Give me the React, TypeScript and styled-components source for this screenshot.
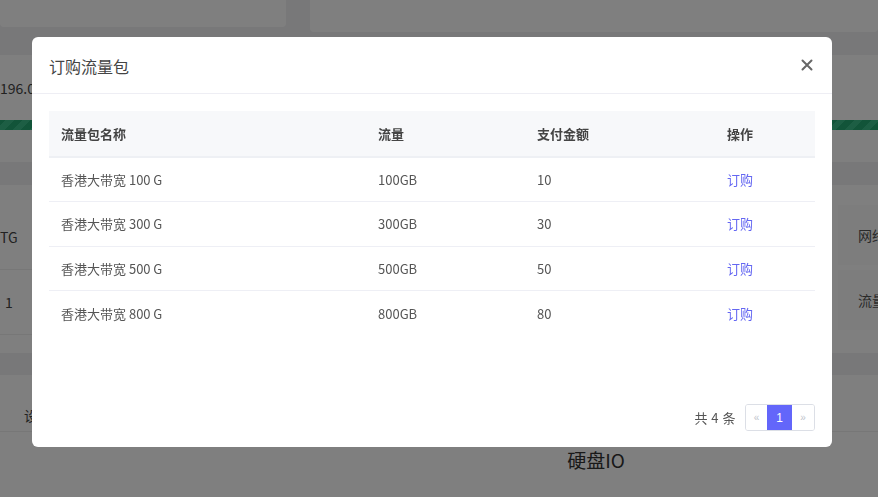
import React from "react";
import styled, { createGlobalStyle } from "styled-components";

const Global = createGlobalStyle`
  html, body { margin: 0; padding: 0; }
  body {
    width: 878px;
    height: 497px;
    overflow: hidden;
    background: #f0f0f2;
    font-family: "Noto Sans CJK SC", "Noto Sans", "Liberation Sans", sans-serif;
    color: #444;
  }
`;

/* ---------- background page ---------- */
const Page = styled.div`
  width: 878px;
  height: 497px;
  display: flex;
  flex-direction: column;
  background: #f0f0f2;
  overflow: hidden;
`;

const TopRow = styled.div`
  display: flex;
  gap: 24px;
  align-items: flex-start;
`;

const TopCard = styled.div<{ $w?: number; $h: number }>`
  background: #fff;
  height: ${(p) => p.$h}px;
  ${(p) => (p.$w ? `width: ${p.$w}px;` : "flex: 1;")}
  border-radius: 0 0 4px 4px;
`;

const InfoCard = styled.div`
  margin-top: 23px;
  height: 107px;
  background: #fff;
  display: flex;
  flex-direction: column;
`;

const InfoText = styled.div`
  font-size: 14px;
  color: #444;
  margin-top: 24px;
  line-height: 18px;
`;

const Stripe = styled.div`
  margin-top: 23px;
  height: 10px;
  background: repeating-linear-gradient(
    -45deg,
    #25a873 0 6px,
    #3bbd88 6px 12px
  );
`;

const StatsCard = styled.div`
  margin-top: 23px;
  height: 168px;
  background: #fff;
  display: flex;
  justify-content: space-between;
`;

const LeftCol = styled.div`
  display: flex;
  flex-direction: column;
  width: 40px;
`;

const LeftCell = styled.div<{ $pad: number }>`
  height: 64px;
  display: flex;
  align-items: center;
  padding-left: ${(p) => p.$pad}px;
  font-size: 14px;
  color: #444;
  border-bottom: 1px solid #eee;
  &:first-child { margin-top: 20px; }
`;

const RightCol = styled.div`
  display: flex;
  flex-direction: column;
  gap: 5px;
  width: 40px;
  padding-top: 20px;
`;

const StatBox = styled.div`
  height: 60px;
  background: #fafafa;
  display: flex;
  align-items: center;
  padding-left: 20px;
  font-size: 14px;
  color: #555;
  white-space: nowrap;
  overflow: hidden;
`;

const BottomCard = styled.div`
  margin-top: 22px;
  background: #fff;
  flex: 1;
  display: flex;
  flex-direction: column;
`;

const BottomRow = styled.div`
  height: 57px;
  box-sizing: border-box;
  padding-top: 23px;
  border-bottom: 1px solid #eee;
  display: flex;
  align-items: center;
  padding-left: 24px;
  font-size: 14px;
  color: #444;
`;

const ChartTitle = styled.div`
  text-align: center;
  padding-left: 314px;
  margin-top: 14px;
  font-size: 19px;
  color: #333;
`;

/* ---------- overlay + modal ---------- */
const Overlay = styled.div`
  position: fixed;
  inset: 0;
  background: rgba(0, 0, 0, 0.5);
  display: flex;
  align-items: flex-start;
  padding: 37px 0 0 32px;
`;

const Modal = styled.div`
  width: 800px;
  height: 410px;
  background: #fff;
  border-radius: 6px;
  display: flex;
  flex-direction: column;
  box-sizing: border-box;
`;

const Header = styled.div`
  height: 57px;
  box-sizing: border-box;
  border-bottom: 1px solid #eeeef4;
  display: flex;
  align-items: center;
  justify-content: space-between;
  padding: 0 17px 0 17px;
`;

const Title = styled.div`
  font-size: 16px;
  color: #444;
  margin-top: 1px;
`;

const Close = styled.button`
  border: none;
  background: transparent;
  padding: 0;
  width: 14px;
  height: 14px;
  display: flex;
  align-items: center;
  justify-content: center;
  cursor: pointer;
  margin-right: 1px;
  margin-top: -1px;
`;

const Body = styled.div`
  flex: 1;
  padding: 17px 17px 16px 17px;
  display: flex;
  flex-direction: column;
`;

const Table = styled.table`
  width: 766px;
  border-collapse: collapse;
  table-layout: fixed;
`;

const Th = styled.th<{ $w: number }>`
  width: ${(p) => p.$w}px;
  height: 46px;
  background: #f7f8fa;
  border-bottom: 2px solid #eef0f4;
  text-align: left;
  padding: 0 12px;
  font-size: 13px;
  font-weight: 700;
  color: #444;
  box-sizing: border-box;
`;

const Tr = styled.tr`
  &:not(:last-child) td { border-bottom: 1px solid #eeeff5; }
`;

const Td = styled.td`
  height: 44.5px;
  padding: 0 12px;
  font-size: 13px;
  color: #555;
  box-sizing: border-box;
`;

const Link = styled.a`
  color: #6467f2;
  text-decoration: none;
  cursor: pointer;
`;

const Footer = styled.div`
  margin-top: auto;
  display: flex;
  justify-content: flex-end;
  align-items: center;
  gap: 9px;
`;

const Total = styled.span`
  font-size: 13px;
  color: #555;
  letter-spacing: 0.5px;
`;

const Pager = styled.div`
  display: flex;
  height: 27px;
  border: 1px solid #dcdfe6;
  border-radius: 3px;
  overflow: hidden;
  box-sizing: border-box;
`;

const PageBtn = styled.span<{ $active?: boolean; $w: number }>`
  width: ${(p) => p.$w}px;
  display: flex;
  align-items: center;
  justify-content: center;
  font-size: ${(p) => (p.$active ? 12 : 10)}px;
  font-family: "Liberation Sans", sans-serif;
  color: ${(p) => (p.$active ? "#fff" : "#c0c4cc")};
  background: ${(p) => (p.$active ? "#6366fa" : "#fff")};
`;

const rows = [
  { name: "香港大带宽 100\u2009G", flow: "100GB", price: "10" },
  { name: "香港大带宽 300\u2009G", flow: "300GB", price: "30" },
  { name: "香港大带宽 500\u2009G", flow: "500GB", price: "50" },
  { name: "香港大带宽 800\u2009G", flow: "800GB", price: "80" },
];

export default function App() {
  return (
    <>
      <Global />
      <Page>
        <TopRow>
          <TopCard $w={286} $h={27} />
          <TopCard $h={32} />
        </TopRow>
        <InfoCard>
          <InfoText>196.0</InfoText>
          <Stripe />
        </InfoCard>
        <StatsCard>
          <LeftCol>
            <LeftCell $pad={0}>TG</LeftCell>
            <LeftCell $pad={5}>1</LeftCell>
          </LeftCol>
          <RightCol>
            <StatBox>网络</StatBox>
            <StatBox>流量</StatBox>
          </RightCol>
        </StatsCard>
        <BottomCard>
          <BottomRow>设置</BottomRow>
          <ChartTitle>硬盘IO</ChartTitle>
        </BottomCard>
      </Page>
      <Overlay>
        <Modal>
          <Header>
            <Title>订购流量包</Title>
            <Close aria-label="关闭">
              <svg width="12" height="12" viewBox="0 0 12 12">
                <path
                  d="M1.5 1.5 L10.5 10.5 M10.5 1.5 L1.5 10.5"
                  stroke="#666"
                  strokeWidth="2"
                  strokeLinecap="round"
                />
              </svg>
            </Close>
          </Header>
          <Body>
            <Table>
              <thead>
                <tr>
                  <Th $w={317}>流量包名称</Th>
                  <Th $w={159}>流量</Th>
                  <Th $w={190}>支付金额</Th>
                  <Th $w={100}>操作</Th>
                </tr>
              </thead>
              <tbody>
                {rows.map((r) => (
                  <Tr key={r.flow}>
                    <Td>{r.name}</Td>
                    <Td>{r.flow}</Td>
                    <Td>{r.price}</Td>
                    <Td>
                      <Link>订购</Link>
                    </Td>
                  </Tr>
                ))}
              </tbody>
            </Table>
            <Footer>
              <Total>共 4 条</Total>
              <Pager>
                <PageBtn $w={21}>«</PageBtn>
                <PageBtn $w={25} $active>
                  1
                </PageBtn>
                <PageBtn $w={22}>»</PageBtn>
              </Pager>
            </Footer>
          </Body>
        </Modal>
      </Overlay>
    </>
  );
}
